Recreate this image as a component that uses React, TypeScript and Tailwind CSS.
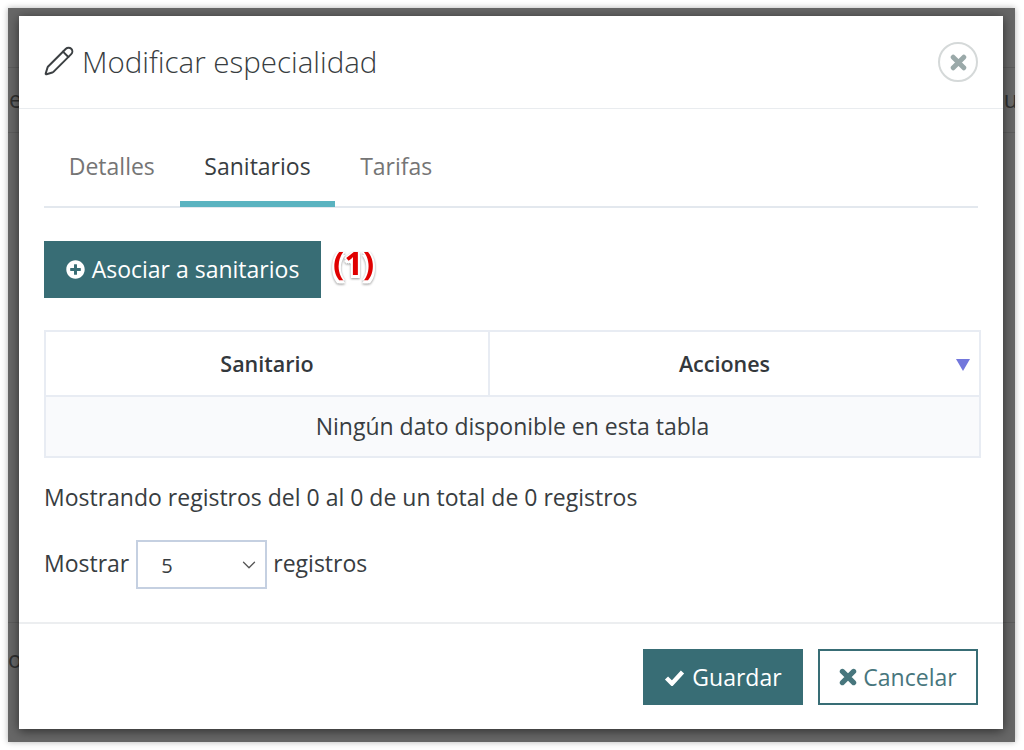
import { Pencil, ChevronDown } from "lucide-react";
import { FaPlusCircle } from "react-icons/fa";

const TABS = ["Detalles", "Sanitarios", "Tarifas"];

function CrossIcon({ size, className }: { size: number; className?: string }) {
  return (
    <svg width={size} height={size} viewBox="0 0 16 16" className={className}>
      <path d="M3 3l10 10M13 3L3 13" stroke="currentColor" strokeWidth="4.6" strokeLinecap="round" fill="none" />
    </svg>
  );
}

function CheckIcon() {
  return (
    <svg width="21" height="17" viewBox="0 0 21 17">
      <path d="M2.5 9l5.5 5.5L18.5 3" stroke="currentColor" strokeWidth="4.4" fill="none" />
    </svg>
  );
}

export default function App() {
  return (
    <div className="h-[750px] w-[1024px] overflow-hidden bg-white pl-[8px] pt-[8px] font-['Open_Sans',sans-serif] text-[#383d41]">
      {/* fondo oscurecido con el modal encima */}
      <div className="relative h-[734px] w-[1007px] overflow-hidden bg-[#676767] pl-[11px] pt-[8px] shadow-[0_0_6px_rgba(0,0,0,0.3)]">
        <div className="absolute left-0 top-[59px] h-px w-full bg-[#5c5c5c]" />
        <div className="absolute left-0 top-[124px] h-px w-full bg-[#5c5c5c]" />
        <div className="absolute left-0 top-[614px] h-px w-full bg-[#5c5c5c]" />
        <span className="absolute left-[1px] top-[76px] text-[23px] leading-[30px] text-[#2f2f2f]">e</span>
        <span className="absolute left-[979px] top-[76px] text-[23px] leading-[30px] text-[#2f2f2f]">Du</span>
        <span className="absolute left-0 top-[636px] text-[23px] leading-[30px] text-[#2f2f2f]">o</span>

        <div className="relative flex h-[713px] w-[984px] flex-col bg-white shadow-[0_2px_10px_rgba(0,0,0,0.55)]">
          <header className="flex h-[93px] shrink-0 items-center justify-between border-b border-[#e9ecef] pl-[25px] pr-[25px]">
            <div className="flex items-center gap-[7px]">
              <Pencil size={32} strokeWidth={1.5} className="-ml-[1px] -mt-[2px] text-[#3c4043]" />
              <h1 className="text-[29.5px] font-light leading-[38px] text-[#383d41]">Modificar especialidad</h1>
            </div>
            <button className="flex h-[40px] w-[40px] items-center justify-center rounded-full border-2 border-[#d5d9d9] text-[#9aa9a9]">
              <CrossIcon size={17} />
            </button>
          </header>

          <div className="flex-1 px-[25px]">
            <nav className="flex h-[99px] items-end border-b-2 border-[#e3e8ee]">
              {TABS.map((tab) => {
                const active = tab === "Sanitarios";
                return (
                  <div
                    key={tab}
                    className={`-mb-[1px] flex h-[78px] items-center border-b-[6px] px-[24.75px] pt-[2px] text-[23px] ${
                      active ? "border-[#5ab3c0] text-[#383d41]" : "border-transparent text-[#757575]"
                    }`}
                  >
                    {tab}
                  </div>
                );
              })}
            </nav>

            <div className="mt-[33px] flex items-start">
              <button className="flex h-[57px] w-[277px] items-center justify-center gap-[7px] bg-[#386d75] text-[23px] text-white">
                <FaPlusCircle size={19} />
                Asociar a sanitarios
              </button>
              <span className="-mt-[1px] ml-[12px] text-[33px] font-bold leading-[46px] text-[#e00000] [filter:drop-shadow(0_1px_1px_rgba(0,0,0,0.4))] [text-shadow:2px_0_0_#fff,-2px_0_0_#fff,0_3px_0_#fff,2px_3px_0_#fff,-2px_3px_0_#fff]">
                (1)
              </span>
            </div>

            <table className="mt-[32px] w-[937px] table-fixed border-collapse text-[23px]">
              <thead>
                <tr className="h-[65px]">
                  <th className="w-[444px] border-2 border-[#e8ecf3] pt-[2px] text-[21.5px] font-semibold text-[#33383c]">Sanitario</th>
                  <th className="relative border-2 border-[#e8ecf3] pr-[20px] pt-[2px] text-[21.5px] font-semibold text-[#33383c]">
                    Acciones
                    <svg className="absolute right-[9px] top-[27px]" width="14" height="12" viewBox="0 0 14 12">
                      <path d="M0 0h14L7 12z" fill="#7277dc" />
                    </svg>
                  </th>
                </tr>
              </thead>
              <tbody>
                <tr className="h-[61px] bg-[#f9fafc]">
                  <td colSpan={2} className="border-2 border-[#e8ecf3] text-center text-[#383d41]">
                    Ningún dato disponible en esta tabla
                  </td>
                </tr>
              </tbody>
            </table>

            <p className="mt-[24px] text-[23px] leading-[30px]">Mostrando registros del 0 al 0 de un total de 0 registros</p>

            <div className="mt-[28px] flex items-center gap-[7px] text-[23px]">
              <span className="-mt-[3px]">Mostrar</span>
              <div className="flex h-[49px] w-[131px] items-center justify-between border-2 border-[#c5d0e1] pl-[23px] pr-[5px] text-[20px]">
                <span className="mt-[3px]">5</span>
                <ChevronDown size={22} strokeWidth={1.4} className="text-[#555]" />
              </div>
              <span className="-ml-[1px] -mt-[3px]">registros</span>
            </div>
          </div>

          <footer className="flex h-[107px] shrink-0 items-center justify-end gap-[15px] border-t-2 border-[#eceef0] pt-[1px] pr-[25px] text-[23px]">
            <button className="flex h-[56px] w-[160px] items-center justify-center gap-[7px] bg-[#386d75] text-white">
              <CheckIcon />
              Guardar
            </button>
            <button className="flex h-[56px] w-[160px] items-center justify-center gap-[6px] border-2 border-[#386d75] text-[#47767d]">
              <CrossIcon size={18} />
              Cancelar
            </button>
          </footer>
        </div>
      </div>
    </div>
  );
}
